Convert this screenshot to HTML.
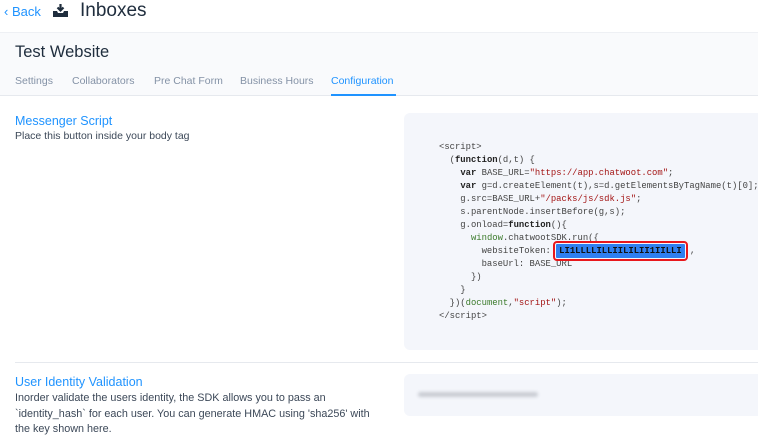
<!DOCTYPE html>
<html><head><style>
*{margin:0;padding:0;box-sizing:border-box}
body{width:758px;height:439px;overflow:hidden;background:#fff;font-family:"Liberation Sans",sans-serif;position:relative;color:#1f2d3d}
.a{position:absolute;white-space:nowrap}
.code{position:absolute;left:404px;top:113px;width:370px;height:237px;background:#f4f6fb;border-radius:6px}
pre{position:absolute;left:439px;top:141px;font-family:"Liberation Mono",monospace;font-size:8.9px;line-height:13px;color:#444}
.k{color:#222;font-weight:bold}.s{color:#a31515}.g{color:#3a7a2a}
.tok{background:#2f7ff0;color:#111;outline:2px solid #e8181c;outline-offset:1px;padding:2px 3px;border-radius:1px;font-weight:bold}
</style></head><body>
<div class="a" style="left:4px;top:4px;font-size:13px;color:#1f93ff">‹ Back</div>
<svg class="a" style="left:53px;top:4px" width="15" height="14" viewBox="0 0 15 14"><path d="M7.5 0v6M4.5 3.5l3 3 3-3" stroke="#1f2d3d" stroke-width="2.2" fill="none"/><path d="M0 7h4l1 2h5l1-2h4v6H0z" fill="#1f2d3d"/></svg>
<div class="a" style="left:80px;top:0px;font-size:19px;color:#1f2d3d">Inboxes</div>
<div class="a" style="left:0;top:32px;width:758px;height:64px;background:#f9fafc;border-top:1px solid #eef0f4;border-bottom:1px solid #e6e9ee"></div>
<div class="a" style="left:15px;top:43px;font-size:16.5px;color:#1f2d3d">Test Website</div>
<div class="a" style="left:15px;top:75px;font-size:10.5px;color:#8492a6">Settings</div>
<div class="a" style="left:72px;top:75px;font-size:10.5px;color:#8492a6">Collaborators</div>
<div class="a" style="left:154px;top:75px;font-size:10.5px;color:#8492a6">Pre Chat Form</div>
<div class="a" style="left:240px;top:75px;font-size:10.5px;color:#8492a6">Business Hours</div>
<div class="a" style="left:331px;top:75px;font-size:10.5px;color:#1f93ff">Configuration</div>
<div class="a" style="left:331px;top:94px;width:65px;height:2px;background:#1f93ff"></div>
<div class="a" style="left:15px;top:114px;font-size:12.5px;color:#1f93ff">Messenger Script</div>
<div class="a" style="left:15px;top:130px;font-size:10.5px;color:#3c4858">Place this button inside your body tag</div>
<div class="code"></div>
<pre>&lt;script&gt;
  (<span class="k">function</span>(d,t) {
    <span class="k">var</span> BASE_URL=<span class="s">"https://app.chatwoot.com"</span>;
    <span class="k">var</span> g=d.createElement(t),s=d.getElementsByTagName(t)[0];
    g.src=BASE_URL+<span class="s">"/packs/js/sdk.js"</span>;
    s.parentNode.insertBefore(g,s);
    g.onload=<span class="k">function</span>(){
      <span class="g">window</span>.chatwootSDK.run({
        websiteToken: <span class="tok">LI1LLLLILLIILILII1IILLI</span> ,
        baseUrl: BASE_URL
      })
    }
  })(<span class="g">document</span>,<span class="s">"script"</span>);
&lt;/script&gt;</pre>
<div class="a" style="left:15px;top:362px;width:743px;height:1px;background:#e6e9ee"></div>
<div class="a" style="left:15px;top:375px;font-size:12.5px;color:#1f93ff">User Identity Validation</div>
<div class="a" style="left:15px;top:391px;font-size:10.8px;line-height:15.5px;color:#3c4858;white-space:normal;width:372px">Inorder validate the users identity, the SDK allows you to pass an `identity_hash` for each user. You can generate HMAC using 'sha256' with the key shown here.</div>
<div class="a" style="left:404px;top:374px;width:370px;height:42px;background:#f4f6fb;border-radius:6px"></div>
<div class="a" style="left:418px;top:392px;width:120px;height:5px;background:#c9ccd3;border-radius:3px;filter:blur(1.5px)"></div>
</body></html>
